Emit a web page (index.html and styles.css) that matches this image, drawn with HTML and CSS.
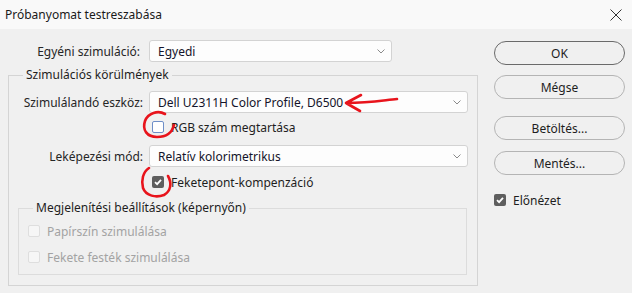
FILE: index.html
```html
<!DOCTYPE html>
<html lang="hu">
<head>
    <meta charset="UTF-8">
    <title>Próbanyomat testreszabása</title>
    <link rel="stylesheet" href="styles.css">
</head>
<body>
    <div class="titlebar">
        <span class="title">Próbanyomat testreszabása</span>
        <svg class="close" width="12" height="12" viewBox="0 0 12 12">
            <path d="M0.5 0.5 L11.5 11.5 M11.5 0.5 L0.5 11.5" stroke="#333" stroke-width="1" fill="none"/>
        </svg>
    </div>

    <div class="dialog">
        <div class="left-col">
            <div class="field-row first-row">
                <span class="field-label">Egyéni szimuláció:</span>
                <div class="dropdown short">
                    <span>Egyedi</span>
                    <svg class="chevron" width="8" height="5" viewBox="0 0 8 5"><path d="M0.5 0.5 L4 4 L7.5 0.5" stroke="#8a8a8a" fill="none"/></svg>
                </div>
            </div>

            <fieldset class="group">
                <legend>Szimulációs körülmények</legend>

                <div class="field-row">
                    <span class="field-label">Szimulálandó eszköz:</span>
                    <div class="dropdown">
                        <span>Dell U2311H Color Profile, D6500</span>
                        <svg class="chevron" width="8" height="5" viewBox="0 0 8 5"><path d="M0.5 0.5 L4 4 L7.5 0.5" stroke="#8a8a8a" fill="none"/></svg>
                    </div>
                </div>

                <label class="check-row indent rgb-row">
                    <span class="box focus"></span>
                    <span>RGB szám megtartása</span>
                </label>

                <div class="field-row mode-row">
                    <span class="field-label">Leképezési mód:</span>
                    <div class="dropdown">
                        <span>Relatív kolorimetrikus</span>
                        <svg class="chevron" width="8" height="5" viewBox="0 0 8 5"><path d="M0.5 0.5 L4 4 L7.5 0.5" stroke="#8a8a8a" fill="none"/></svg>
                    </div>
                </div>

                <label class="check-row indent black-row">
                    <span class="box checked">
                        <svg width="12" height="12" viewBox="0 0 12 12"><path d="M3 6.2 L5.1 8.2 L9 3.9" stroke="#fff" stroke-width="1.8" fill="none"/></svg>
                    </span>
                    <span>Feketepont-kompenzáció</span>
                </label>

                <fieldset class="group inner">
                    <legend>Megjelenítési beállítások (képernyőn)</legend>
                    <label class="check-row disabled paper-row">
                        <span class="box"></span>
                        <span>Papírszín szimulálása</span>
                    </label>
                    <label class="check-row disabled ink-row">
                        <span class="box"></span>
                        <span>Fekete festék szimulálása</span>
                    </label>
                </fieldset>
            </fieldset>
        </div>

        <div class="right-col">
            <button class="btn default">OK</button>
            <button class="btn cancel">Mégse</button>
            <button class="btn load">Betöltés...</button>
            <button class="btn save">Mentés...</button>
            <label class="check-row preview-row">
                <span class="box checked">
                    <svg width="12" height="12" viewBox="0 0 12 12"><path d="M3 6.2 L5.1 8.2 L9 3.9" stroke="#fff" stroke-width="1.8" fill="none"/></svg>
                </span>
                <span>Előnézet</span>
            </label>
        </div>
    </div>

    <!-- red marker scribbles drawn over the screenshot -->
    <svg class="marks" width="632" height="293" viewBox="0 0 632 293">
        <g stroke="#e8141c" stroke-width="2.6" fill="none" stroke-linecap="round" stroke-linejoin="round">
            <path d="M165 114 C158 110 148 113 145 121 C142 130 147 137 157 137 C166 137 172 133 174 125"/>
            <path d="M149 168 C143 172 141 180 143 188 C146 196 156 198 164 195 C171 191 172 183 168 176"/>
            <path d="M397 99 C385 100 370 103 346 103 M346 103 L361 95 M346 103 L360 111"/>
        </g>
    </svg>
</body>
</html>
```

FILE: styles.css
```css
body {
    margin: 0;
    width: 632px;
    height: 293px;
    overflow: hidden;
    background-color: #f0f0f0;
    font-family: "Noto Sans", "Open Sans", sans-serif;
    font-size: 12px;
    color: #1e1e1e;
    position: relative;
}

.titlebar {
    height: 29px;
    background-color: #f9f9f9;
    display: flex;
    align-items: center;
    justify-content: space-between;
    padding: 0 8px 0 5px;
}

.title {
    font-size: 12px;
    color: #1a1a1a;
}

.close {
    margin-right: 2px;
}

.dialog {
    display: flex;
}

.left-col {
    width: 470px;
    margin-left: 8px;
    padding-top: 11px;
}

.right-col {
    width: 131px;
    margin-left: 16px;
    padding-top: 12px;
    display: flex;
    flex-direction: column;
}

.field-row {
    display: flex;
    align-items: center;
    height: 22px;
}

.field-label {
    width: 135px;
    text-align: right;
    margin-right: 6px;
    color: #262626;
}

.first-row .field-label {
    width: 132px;
    margin-right: 9px;
}

.group .field-label {
    width: 134px;
}

.dropdown {
    flex: none;
    width: 319px;
    height: 22px;
    box-sizing: border-box;
    border: 1px solid #d3d3d3;
    border-radius: 3px;
    background-color: #fdfdfd;
    display: flex;
    align-items: center;
    justify-content: space-between;
    padding: 0 6px 0 8px;
    color: #14142a;
}

.dropdown.short {
    width: 243px;
}

.group {
    margin: 5px 0 0 0;
    padding: 0 0 10px 0;
    border: 1px solid #d4d4d4;
    min-width: 0;
}

.group legend {
    margin-left: 14px;
    padding: 0 3px;
    line-height: 16px;
    color: #1e1e1e;
}

.group .field-row {
    margin-top: 8px;
}

.group .mode-row {
    margin-top: 11px;
}

.check-row {
    display: flex;
    align-items: center;
    height: 14px;
}

.check-row .box {
    flex: none;
    width: 12px;
    height: 12px;
    box-sizing: border-box;
    border: 1px solid #8c8c8c;
    border-radius: 2px;
    background-color: #fff;
    margin-right: 7px;
    display: flex;
}

.check-row .box.focus {
    border-color: #6f8fc8;
}

.check-row .box.checked {
    border: none;
    background-color: #5e5e5e;
}

.indent {
    margin-left: 143px;
}

.rgb-row {
    margin-top: 7px;
}

.black-row {
    margin-top: 8px;
}

.group.inner {
    margin: 11px 10px 0 9px;
    border-color: #dcdcdc;
    padding-bottom: 10px;
}

.disabled {
    color: #a3a3a3;
    margin-left: 9px;
}

.disabled .box {
    border-color: #dedede;
    background-color: #f6f6f6;
}

.paper-row {
    margin-top: 8px;
}

.ink-row {
    margin-top: 12px;
}

.btn {
    height: 24px;
    border: 1px solid #b4b4b4;
    border-radius: 12px;
    background-color: #f0f0f0;
    font-family: inherit;
    font-size: 12px;
    color: #1e1e1e;
    padding: 0;
}

.btn.default {
    border-color: #6a6a6a;
}

.cancel {
    margin-top: 10px;
}

.load {
    margin-top: 17px;
}

.save {
    margin-top: 11px;
}

.preview-row {
    margin-top: 18px;
}

.marks {
    position: absolute;
    left: 0;
    top: 0;
    pointer-events: none;
}
```
